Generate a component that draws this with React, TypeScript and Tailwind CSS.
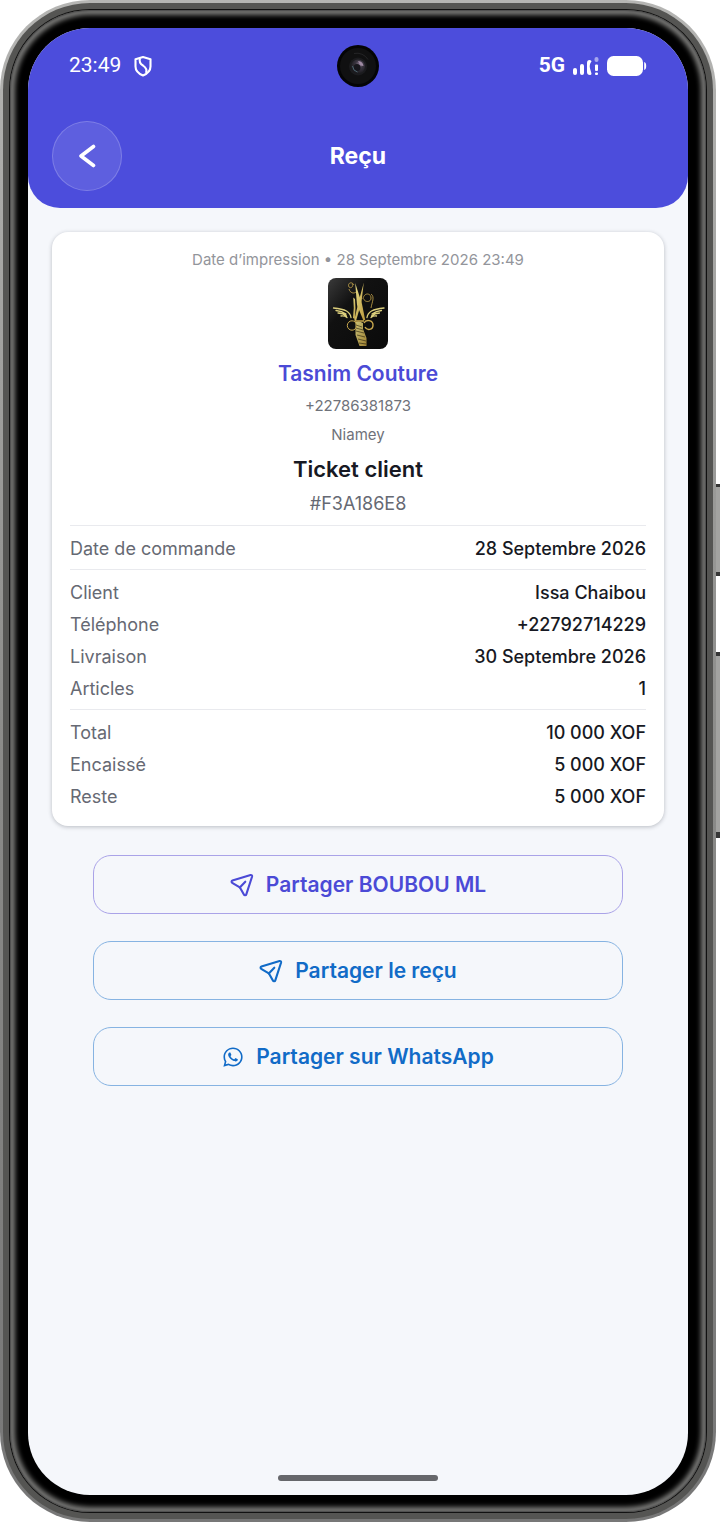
import { FaWhatsapp } from "react-icons/fa";

type Row = { label: string; value: string };

const sections: Row[][] = [
  [{ label: "Date de commande", value: "28 Septembre 2026" }],
  [
    { label: "Client", value: "Issa Chaibou" },
    { label: "Téléphone", value: "+22792714229" },
    { label: "Livraison", value: "30 Septembre 2026" },
    { label: "Articles", value: "1" },
  ],
  [
    { label: "Total", value: "10 000 XOF" },
    { label: "Encaissé", value: "5 000 XOF" },
    { label: "Reste", value: "5 000 XOF" },
  ],
];

function SendIcon() {
  return (
    <svg aria-hidden="true" viewBox="0 0 24 24" className="size-6" fill="none" stroke="currentColor" strokeWidth="2.1" strokeLinecap="round" strokeLinejoin="round">
      <path d="M2.4 7.6 20.6 2.1a1.2 1.2 0 0 1 1.5 1.4L16.3 21.3a1.3 1.3 0 0 1-2.4.2l-3.7-6.6a2 2 0 0 0-.8-.8L2.2 9.8a1.2 1.2 0 0 1 .2-2.2Z" />
      <path d="m9.8 14.4 5.500-5.700" />
    </svg>
  );
}

function ShieldIcon() {
  return (
    <svg aria-hidden="true" viewBox="0 0 20 22" className="h-[22px] w-5" fill="none" stroke="white" strokeWidth="2.1" strokeLinejoin="round">
      <path d="M10 2 17.500 4.300v7.200c0 4.200-3.200 7.200-7.500 9-4.300-1.800-7.500-4.800-7.500-9V4.300Z" />
      <path d="M7 3.300c-1.200 3.500.3 5.500 3 7.200 3 2 4.300 4.200 3 7.500" />
    </svg>
  );
}

function SignalIcon() {
  return (
    <svg aria-hidden="true" viewBox="0 0 26 18" className="h-[18px] w-[26px]" fill="white">
      <rect x="0" y="11" width="4" height="7" rx="2" />
      <rect x="7" y="7" width="4" height="11" rx="2" />
      <path d="M14 6q0-3 2.500-3 2 0 2 1.500-2.500 3-1.500 7 1 3.500 1.500 5 0 1.500-1.500 1.500-3 0-3-3Z" />
      <rect x="21.500" y="0" width="4" height="5" rx="2" opacity=".5" />
      <rect x="22" y="7.500" width="3" height="6.500" rx="1" />
      <rect x="22" y="15.500" width="3" height="2.500" rx="1" />
    </svg>
  );
}

function BatteryIcon() {
  return (
    <svg aria-hidden="true" viewBox="0 0 40 20" className="h-5 w-10" fill="white">
      <rect x="0" y="0" width="36" height="20" rx="6.500" />
      <path d="M37.200 6q2 .5 2 4t-2 4Z" />
    </svg>
  );
}

function Camera() {
  return (
    <svg aria-hidden="true" viewBox="0 0 44 44" className="size-[44px]">
      <defs>
        <radialGradient id="lens" cx=".6" cy=".35" r=".7">
          <stop offset="0" stopColor="#8a7890" />
          <stop offset=".4" stopColor="#3a3540" />
          <stop offset="1" stopColor="#17171a" />
        </radialGradient>
      </defs>
      <circle cx="22" cy="22" r="21" fill="#040405" />
      <circle cx="22" cy="22" r="18" fill="#101011" />
      <path d="M18 9.500a13 13 0 0 1 14 6" fill="none" stroke="#242426" />
      <circle cx="22" cy="22.500" r="9" fill="#1b1b1e" />
      <circle cx="22" cy="22.500" r="7" fill="url(#lens)" />
      <circle cx="21" cy="23.500" r="3.500" fill="#17161c" />
      <path d="M22 17q5 .5 5.500 5l-3-.5Z" fill="#a08ba4" />
      <path d="M16.500 22q.5 5 5 6" fill="none" stroke="#4c6670" />
    </svg>
  );
}

function ShopLogo() {
  return (
    <svg role="img" aria-label="Logo Tasnim Couture" viewBox="0 0 60 71" className="mt-[7px] h-[71px] w-[60px] rounded-lg">
      <defs>
        <linearGradient id="night" x1="0" y1="0" x2="1" y2="1">
          <stop offset="0" stopColor="#3a3a3a" />
          <stop offset=".35" stopColor="#111" />
          <stop offset="1" stopColor="#0a0a0a" />
        </linearGradient>
        <linearGradient id="gold" x1="0" y1="0" x2="1" y2="1">
          <stop offset="0" stopColor="#e9df8a" />
          <stop offset="1" stopColor="#b8963a" />
        </linearGradient>
      </defs>
      <rect width="60" height="71" fill="url(#night)" />
      <g fill="url(#gold)">
        <path d="M35.800 4.500 33.500 24 28 43l-1.800-.6 4.300-18.400Z" />
        <path d="m27.200 5 6.800 21 3.200 16-1.800.6L29 27Z" />
        <path d="m25.300 19.500 1.700 1.500.5 9-.5 11-2-1 .8-10Z" />
        <path d="M27.500 44q4-1.500 7.500 1v6l3.500 9v8h-7l-4-11Z" opacity=".85" />
      </g>
      <g fill="none" stroke="#dccf7c" strokeWidth="1.300" strokeLinecap="round">
        <path d="M5.500 30q9 1 13 3 4 2.500 4.500 6.500M8 32.500q6 .5 10 3.500M10 35q5 0 8.500 3M13 38q3.500-.5 6 1.500" />
        <path d="M56 30q-8.500 1-12.500 3-4 2.500-4.500 6.500M53.500 32.500q-5.500.5-9.500 3.500M51.500 35q-4.500 0-8 3M48.500 38q-3-.5-5.500 1.500" />
      </g>
      <g fill="none" stroke="#caa94e" strokeWidth="1">
        <circle cx="24" cy="47.500" r="4.700" />
        <path d="M36 45c2-4 9-3 9 2s-6 6-8 2m-10-6h9" strokeWidth="1.400" />
        <path d="M26 7c-2-4-7-2-5 2 2 2 5-1 3-3m-3 5c1 4 5 5 7 3M35 21c1-7 8-6 8-1s-7 4-7 1m7-5c4 3 1 8 0 14" strokeWidth=".8" />
      </g>
      <path d="m28 47 6 2m-6 1 7 2m-7 1 8 2m-7 2 8 2m-7 2 8 2m-7 2 7 1" stroke="#191407" strokeWidth=".8" opacity=".7" />
    </svg>
  );
}

function Receipt() {
  return (
    <section className="flex flex-col items-center rounded-2xl bg-white px-[18px] pt-[17px] pb-[9px] shadow-[0_1px_4px_rgba(30,35,50,0.28)]">
      <p className="text-[15px] leading-[22px] text-[#93959b]">Date d’impression • 28 Septembre 2026 23:49</p>
      <ShopLogo />
      <h2 className="mt-[9px] text-[21px] leading-8 font-semibold text-[#4b4ad6]">Tasnim Couture</h2>
      <p className="text-[15px] leading-8 text-[#6f727a]">+22786381873</p>
      <p className="text-[15px] leading-[26px] text-[#6f727a]">Niamey</p>
      <h3 className="text-[22px] leading-[42px] font-semibold text-[#171923]">Ticket client</h3>
      <p className="mb-[7px] text-[18px] leading-7 text-[#666973]">#F3A186E8</p>
      {sections.map((rows) => (
        <dl key={rows[0].label} className="w-full border-t border-[#e9eaee] pt-1.5 pb-[5px]">
          {rows.map((row) => (
            <div key={row.label} className="flex h-8 items-center justify-between text-[18px]">
              <dt className="text-[#666973]">{row.label}</dt>
              <dd className="font-medium text-[#171923]">{row.value}</dd>
            </div>
          ))}
        </dl>
      ))}
    </section>
  );
}

export default function App() {
  return (
    <div className="relative flex min-h-screen bg-white pr-1 font-['Inter',sans-serif]">
      <div className="absolute top-[484px] right-0 h-[92px] w-[5px] border-t-3 border-b-4 border-[#363636] bg-[#a3a3a1]" />
      <div className="absolute top-[652px] right-0 h-[186px] w-[5px] border-t-4 border-b-6 border-[#363636] bg-[#a3a3a1]" />
      <div className="relative flex grow rounded-[90px] bg-linear-to-b from-[#b5b5b3] via-[#8b8b89] to-[#777] p-[3px]">
        <div className="flex grow rounded-[87px] bg-[#555553] p-1.5">
          <div className="flex grow rounded-[81px] bg-[#111] p-px">
            <div className="flex grow rounded-[80px] bg-black px-[18px] pt-[18px] pb-[17px] shadow-[inset_0_0_2px_1px_#444,inset_0_0_5px_5px_#7c7c7a]">
              <div className="flex grow flex-col overflow-hidden rounded-[62px] bg-[#f5f7fb]">
                <header className="rounded-b-[32px] bg-[#4c4ddc] px-6 pb-[17px] text-white">
                  <div className="grid h-[75px] grid-cols-[1fr_auto_1fr] items-center px-[17px] font-['Roboto',sans-serif]">
                    <div className="flex items-center gap-3">
                      <time className="text-[21px]">23:49</time>
                      <ShieldIcon />
                    </div>
                    <Camera />
                    <div className="flex items-center justify-end gap-2">
                      <span className="text-[21px] font-bold">5G</span>
                      <SignalIcon />
                      <BatteryIcon />
                    </div>
                  </div>
                  <div className="grid grid-cols-[70px_1fr_70px] items-center pt-[18px]">
                    <button type="button" aria-label="Retour" className="flex size-[70px] items-center justify-center rounded-full border border-white/20 bg-white/10">
                      <svg aria-hidden="true" viewBox="0 0 24 24" className="size-6" fill="none" stroke="white" strokeWidth="3.600" strokeLinecap="round" strokeLinejoin="round">
                        <path d="M18.500 2.500 6 12l12.500 9.500" />
                      </svg>
                    </button>
                    <h1 className="text-center text-[23px] font-bold">Reçu</h1>
                  </div>
                </header>
                <main className="flex grow flex-col px-6 pt-6">
                  <Receipt />
                  <div className="flex flex-col gap-[27px] px-[41px] pt-[29px] text-[21px] font-semibold text-[#116bc7]">
                    <button type="button" className="flex h-[59px] items-center justify-center gap-3 rounded-[18px] border border-[#aaa3e8] text-[#4b4ad6]">
                      <SendIcon />
                      Partager BOUBOU ML
                    </button>
                    <button type="button" className="flex h-[59px] items-center justify-center gap-3 rounded-[18px] border border-[#86b3e2]">
                      <SendIcon />
                      Partager le reçu
                    </button>
                    <button type="button" className="flex h-[59px] items-center justify-center gap-3 rounded-[18px] border border-[#86b3e2]">
                      <FaWhatsapp aria-hidden="true" className="size-[22px]" />
                      Partager sur WhatsApp
                    </button>
                  </div>
                </main>
                <div className="mx-auto mb-[14px] h-1.5 w-[160px] rounded-full bg-[#66676b]" />
              </div>
            </div>
          </div>
        </div>
      </div>
    </div>
  );
}
